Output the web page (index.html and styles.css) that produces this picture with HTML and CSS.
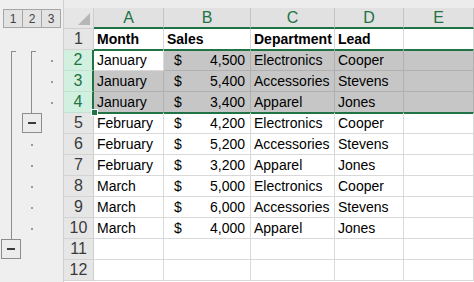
FILE: index.html
```html
<!DOCTYPE html>
<html lang="en">
<head>
    <meta charset="UTF-8">
    <meta name="viewport" content="width=device-width, initial-scale=1.0">
    <title>Grouped Rows</title>
    <link rel="stylesheet" href="styles.css">
</head>
<body>
<div class="window">
    <div class="outline">
        <div class="levels">
            <span class="level">1</span>
            <span class="level">2</span>
            <span class="level">3</span>
        </div>
        <div class="outline-grid">
            <div class="bracket lvl1"></div>
            <div class="toggle lvl1-box"><span></span></div>
            <div class="bracket lvl2"></div>
            <div class="toggle lvl2-box"><span></span></div>
            <i class="dot" style="grid-area: 2 / 3"></i>
            <i class="dot" style="grid-area: 3 / 3"></i>
            <i class="dot" style="grid-area: 4 / 3"></i>
            <i class="dot" style="grid-area: 6 / 2"></i>
            <i class="dot" style="grid-area: 7 / 2"></i>
            <i class="dot" style="grid-area: 8 / 2"></i>
            <i class="dot" style="grid-area: 9 / 2"></i>
            <i class="dot" style="grid-area: 10 / 2"></i>
        </div>
    </div>

    <div class="sheet">
        <div class="corner"><span class="tri"></span></div>
        <div class="col-head">A</div>
        <div class="col-head">B</div>
        <div class="col-head">C</div>
        <div class="col-head">D</div>
        <div class="col-head">E</div>

        <div class="row-head">1</div>
        <div class="cell bold above">Month</div>
        <div class="cell bold above">Sales</div>
        <div class="cell bold above">Department</div>
        <div class="cell bold above">Lead</div>
        <div class="cell above"></div>

        <div class="row-head picked">2</div>
        <div class="cell active top">January</div>
        <div class="cell sel top money"><span>$</span><span>4,500</span></div>
        <div class="cell sel top">Electronics</div>
        <div class="cell sel top">Cooper</div>
        <div class="cell sel top"></div>

        <div class="row-head picked">3</div>
        <div class="cell sel">January</div>
        <div class="cell sel money"><span>$</span><span>5,400</span></div>
        <div class="cell sel">Accessories</div>
        <div class="cell sel">Stevens</div>
        <div class="cell sel"></div>

        <div class="row-head picked">4</div>
        <div class="cell sel bottom handle">January</div>
        <div class="cell sel bottom money"><span>$</span><span>3,400</span></div>
        <div class="cell sel bottom">Apparel</div>
        <div class="cell sel bottom">Jones</div>
        <div class="cell sel bottom"></div>

        <div class="row-head">5</div>
        <div class="cell below">February</div>
        <div class="cell below money"><span>$</span><span>4,200</span></div>
        <div class="cell below">Electronics</div>
        <div class="cell below">Cooper</div>
        <div class="cell below"></div>

        <div class="row-head">6</div>
        <div class="cell">February</div>
        <div class="cell money"><span>$</span><span>5,200</span></div>
        <div class="cell">Accessories</div>
        <div class="cell">Stevens</div>
        <div class="cell"></div>

        <div class="row-head">7</div>
        <div class="cell">February</div>
        <div class="cell money"><span>$</span><span>3,200</span></div>
        <div class="cell">Apparel</div>
        <div class="cell">Jones</div>
        <div class="cell"></div>

        <div class="row-head">8</div>
        <div class="cell">March</div>
        <div class="cell money"><span>$</span><span>5,000</span></div>
        <div class="cell">Electronics</div>
        <div class="cell">Cooper</div>
        <div class="cell"></div>

        <div class="row-head">9</div>
        <div class="cell">March</div>
        <div class="cell money"><span>$</span><span>6,000</span></div>
        <div class="cell">Accessories</div>
        <div class="cell">Stevens</div>
        <div class="cell"></div>

        <div class="row-head">10</div>
        <div class="cell">March</div>
        <div class="cell money"><span>$</span><span>4,000</span></div>
        <div class="cell">Apparel</div>
        <div class="cell">Jones</div>
        <div class="cell"></div>

        <div class="row-head">11</div>
        <div class="cell"></div>
        <div class="cell"></div>
        <div class="cell"></div>
        <div class="cell"></div>
        <div class="cell"></div>

        <div class="row-head">12</div>
        <div class="cell"></div>
        <div class="cell"></div>
        <div class="cell"></div>
        <div class="cell"></div>
        <div class="cell"></div>
    </div>
</div>
</body>
</html>
```

FILE: styles.css
```css
* {
    box-sizing: border-box;
}
html, body {
    margin: 0;
    padding: 0;
    background-color: #ffffff;
    overflow: hidden;
}
body {
    font-family: 'Liberation Sans', Arial, sans-serif;
    width: 474px;
    height: 282px;
}
.window {
    display: flex;
    padding-top: 8px;
    background-color: #ececec;
    height: 282px;
}
.outline {
    width: 64px;
    flex: none;
    background-color: #efefef;
    border-right: 1px solid #cfcfcf;
    margin-top: -8px;
    padding-top: 9px;
}
.levels {
    display: flex;
    padding-left: 3px;
    height: 20px;
}
.level {
    width: 20px;
    height: 19px;
    margin-right: -1px;
    border: 1px solid #a6a6a6;
    background-color: #e3e3e3;
    color: #444;
    font-size: 12px;
    display: flex;
    align-items: center;
    justify-content: center;
}
.outline-grid {
    display: grid;
    grid-template-columns: 20px 20px 20px;
    grid-template-rows: repeat(12, 21px);
    padding-left: 2px;
}
.bracket {
    border-left: 1px solid #8c8c8c;
    border-top: 1px solid #8c8c8c;
    width: 5px;
    margin-top: 1px;
}
.lvl1 {
    grid-column: 1;
    grid-row: 2 / 11;
    margin-left: 9px;
}
.lvl2 {
    grid-column: 2;
    grid-row: 2 / 5;
    margin-left: 9px;
}
.toggle {
    width: 20px;
    height: 20px;
    border: 1px solid #8c8c8c;
    background-color: #ececec;
    display: flex;
    align-items: center;
    justify-content: center;
    align-self: start;
}
.toggle span {
    width: 8px;
    height: 2px;
    background-color: #3a3a3a;
}
.lvl1-box {
    grid-column: 1;
    grid-row: 11;
    margin-left: -1px;
}
.lvl2-box {
    grid-column: 2;
    grid-row: 5;
}
.dot {
    width: 2px;
    height: 2px;
    background-color: #9a9a9a;
    justify-self: center;
    align-self: center;
}
.sheet {
    display: grid;
    grid-template-columns: 30px 70px 87px 84px 69px 70px;
    grid-template-rows: 21px repeat(12, 21px);
    background-color: #ffffff;
}
.corner {
    background-color: #e6e6e6;
    border-right: 1px solid #cfcfcf;
    border-bottom: 1px solid #cfcfcf;
    position: relative;
}
.tri {
    position: absolute;
    right: 3px;
    bottom: 3px;
    width: 0;
    height: 0;
    border-left: 12px solid transparent;
    border-bottom: 12px solid #b7b7b7;
}
.col-head {
    background-color: #e1e1e1;
    color: #217346;
    font-size: 16px;
    text-align: center;
    line-height: 19px;
    border-right: 1px solid #c4c4c4;
    border-bottom: 2px solid #217346;
}
.row-head {
    background-color: #e6e6e6;
    color: #3a3a3a;
    font-size: 16px;
    text-align: center;
    line-height: 20px;
    border-right: 1px solid #cfcfcf;
    border-bottom: 1px solid #d4d4d4;
}
.row-head.picked {
    background-color: #d2f0df;
    color: #217346;
    border-right: 2px solid #217346;
    border-bottom-color: #c4e2d1;
}
.cell {
    font-size: 14px;
    color: #000;
    line-height: 20px;
    padding-left: 3px;
    white-space: nowrap;
    overflow: hidden;
    border-right: 1px solid #d9d9d9;
    border-bottom: 1px solid #d9d9d9;
}
.bold {
    font-weight: bold;
}
.money {
    display: flex;
    justify-content: space-between;
    padding-left: 10px;
    padding-right: 5px;
}
.above {
    border-bottom-color: #217346;
}
.sel {
    background-color: #c6c6c6;
    border-right-color: #b0b0b0;
    border-bottom-color: #b0b0b0;
}
.active {
    background-color: #ffffff;
    border-bottom-color: #d9d9d9;
}
.top {
    box-shadow: inset 0 1px 0 #217346;
}
.bottom {
    border-bottom-color: #217346;
}
.below {
    box-shadow: inset 0 1px 0 #217346;
}
.handle {
    position: relative;
    overflow: visible;
}
.handle::after {
    content: "";
    position: absolute;
    left: -3px;
    bottom: -4px;
    width: 5px;
    height: 5px;
    background-color: #217346;
    border: 1px solid #ffffff;
}
```
